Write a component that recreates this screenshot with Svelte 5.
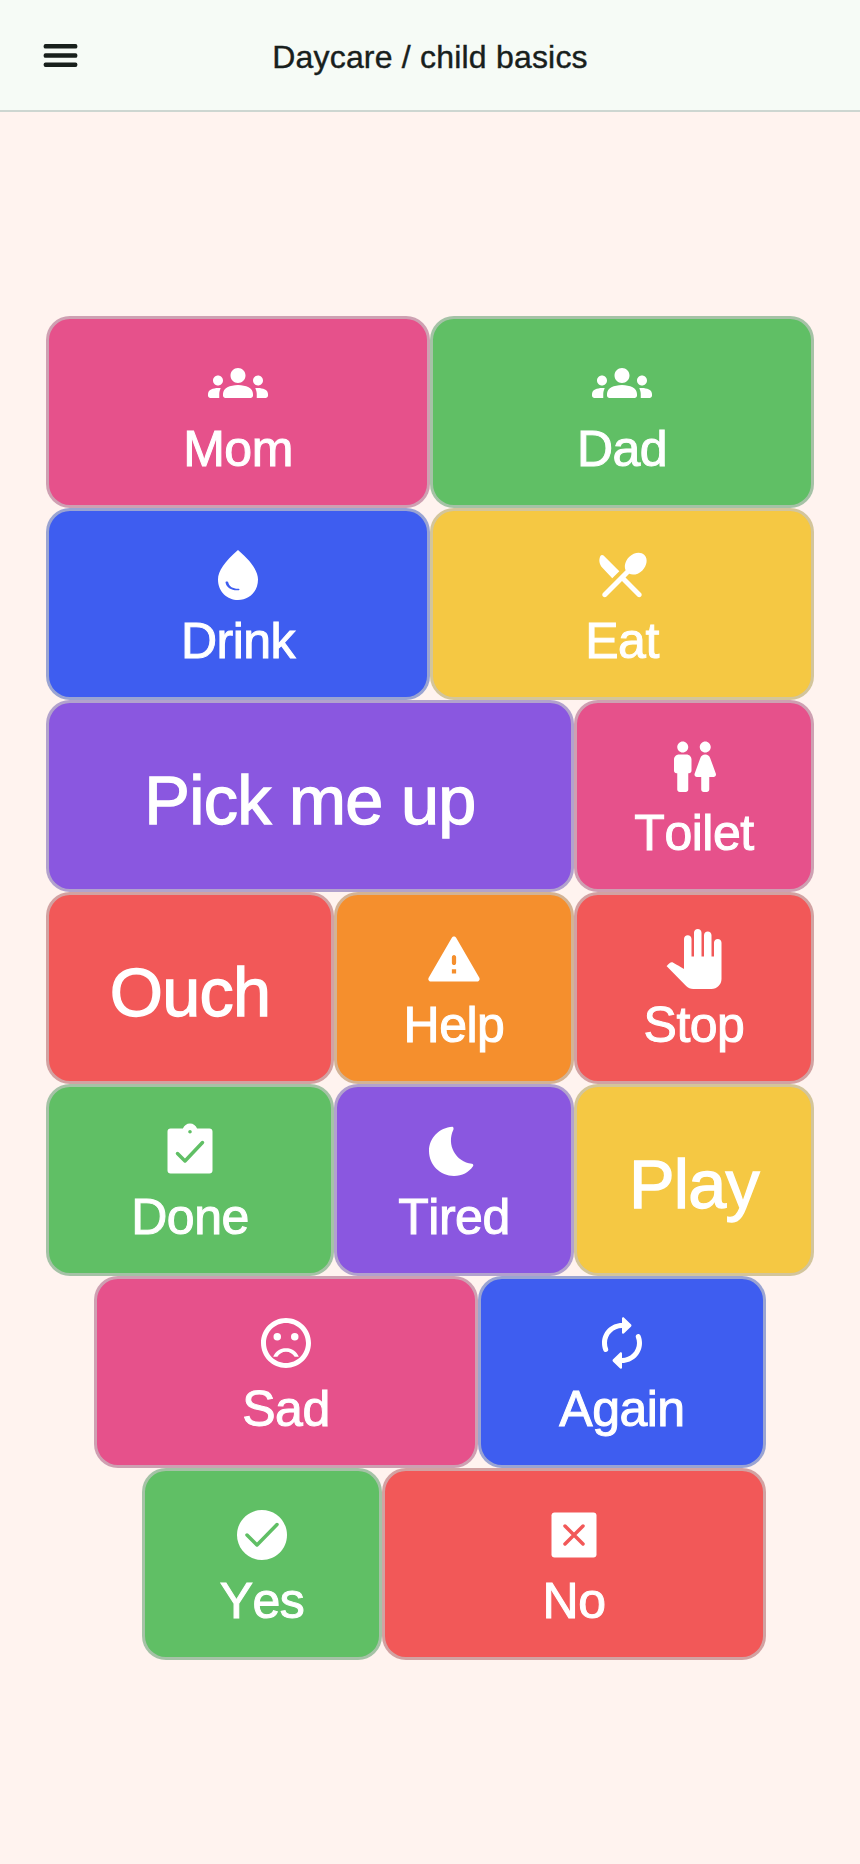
<script>
  const icons = {
    groups: 'M12 12.75c1.63 0 3.07.39 4.24.9 1.08.48 1.76 1.56 1.76 2.73V17c0 .55-.45 1-1 1H7c-.55 0-1-.45-1-1v-.61c0-1.18.68-2.26 1.76-2.73 1.17-.52 2.61-.91 4.24-.91zM4 13c1.1 0 2-.9 2-2s-.9-2-2-2-2 .9-2 2 .9 2 2 2zm1.13 1.1c-.37-.06-.74-.1-1.13-.1-.99 0-1.93.21-2.78.58C.48 14.9 0 15.62 0 16.43V17c0 .55.45 1 1 1h3.5v-1.61c0-.83.23-1.61.63-2.29zM20 13c1.1 0 2-.9 2-2s-.9-2-2-2-2 .9-2 2 .9 2 2 2zm4 3.43c0-.81-.48-1.53-1.22-1.85-.85-.37-1.79-.58-2.78-.58-.39 0-.76.04-1.13.1.4.68.63 1.46.63 2.29V18H23c.55 0 1-.45 1-1v-.57zM12 6c1.66 0 3 1.34 3 3s-1.34 3-3 3-3-1.34-3-3 1.34-3 3-3z',
    drop: 'M12 2c-5.33 4.55-8 8.48-8 11.8 0 4.98 3.8 8.2 8 8.2s8-3.22 8-8.2c0-3.32-2.67-7.25-8-11.8zM7.5 14.6c.3-.1.55.1.62.4.4 1.7 2 2.6 4.2 2.5.35 0 .35.55 0 .6-2.7.3-5-1-5.3-3.1-.03-.2.1-.36.48-.4z',
    eat: 'M8.1 13.34l2.83-2.83-6.3-6.3c-.39-.39-1.04-.28-1.28.22-.73 1.52-.46 3.4.8 4.66zM14.88 11.53c1.53.71 3.68.21 5.27-1.38 1.91-1.91 2.28-4.65.81-6.12-1.46-1.46-4.2-1.1-6.12.81-1.59 1.59-2.09 3.74-1.38 5.27L4.4 19.17c-.39.39-.39 1.02 0 1.41s1.02.39 1.41 0L12 14.41l6.18 6.18c.39.39 1.02.39 1.41 0s.39-1.02 0-1.41L13.41 13z',
    wc: 'M5.3 21v-6.5H5c-.55 0-1-.45-1-1V9c0-1.1.9-2 2-2h3c1.1 0 2 .9 2 2v4.5c0 .55-.45 1-1 1h-.3V21c0 .55-.45 1-1 1H6.3c-.55 0-1-.45-1-1zM18.1 21v-5h1.7c.68 0 1.16-.67.95-1.32l-2.3-6.31C18.18 7.55 17.42 7 16.56 7h-.12c-.86 0-1.63.55-1.9 1.37l-2.3 6.31c-.22.65.26 1.32.95 1.32h1.7v5c0 .55.45 1 1 1h1.2c.55 0 1-.45 1-1zM7.5 6.2c1.2 0 2.2-1 2.2-2.2S8.7 1.8 7.5 1.8 5.3 2.8 5.3 4s1 2.2 2.2 2.2zm9 0c1.2 0 2.2-1 2.2-2.2s-1-2.2-2.2-2.2-2.2 1-2.2 2.2 1 2.2 2.2 2.2z',
    warning: 'M2.73 21h18.53c.77 0 1.25-.83.87-1.5l-9.27-16c-.39-.67-1.35-.67-1.73 0l-9.27 16c-.38.67.1 1.5.87 1.5zM12.85 17.8h-1.7v-1.7h1.7v1.7zM12 14.4c-.45 0-.85-.4-.85-.85v-2.3c0-.45.4-.85.85-.85s.85.4.85.85v2.3c0 .45-.4.85-.85.85z',
    hand: 'M23 5.5V20c0 2.2-1.8 4-4 4h-7.3c-1.08 0-2.1-.43-2.85-1.19L1 14.83s1.26-1.23 1.3-1.25c.22-.19.49-.29.79-.29.22 0 .42.06.6.16.04.01 4.31 2.46 4.31 2.46V4c0-.83.67-1.5 1.5-1.5S11 3.17 11 4v7h1V1.5c0-.83.67-1.5 1.5-1.5S15 .67 15 1.5V11h1V2.5c0-.83.67-1.5 1.5-1.5s1.5.67 1.5 1.5V11h1V5.5c0-.83.67-1.5 1.5-1.5s1.5.67 1.5 1.5z',
    clipboard: 'M19.8 3h-4.98C14.4 1.84 13.3 1 12 1c-1.3 0-2.4.84-2.82 2H4.2C3.5 3 3 3.5 3 4.2v15.6c0 .7.5 1.2 1.2 1.2h15.6c.7 0 1.2-.5 1.2-1.2V4.2c0-.7-.5-1.2-1.2-1.2zM12 3.6c.39 0 .7.31.7.7s-.31.7-.7.7-.7-.31-.7-.7.31-.7.7-.7z',
    moon: 'M11.34 2.3C6.2 2.6 2 6.8 2 12c0 5.52 4.48 10 10 10 3.3 0 5.9-1.5 7.6-3.9.3-.45.06-1-.45-1.05-6.4-.65-10.3-7.6-7.4-13.6.2-.45 0-1.1-.41-1.15z',
    sad: 'M15.5 11a1.5 1.5 0 1 0 0-3 1.5 1.5 0 0 0 0 3zM8.5 11a1.5 1.5 0 1 0 0-3 1.5 1.5 0 0 0 0 3zM12 14c-2.33 0-4.32 1.45-5.12 3.5h1.67c.69-1.19 1.97-2 3.45-2s2.75.81 3.45 2h1.67c-.8-2.05-2.79-3.5-5.12-3.5zM11.99 2C6.47 2 2 6.48 2 12s4.47 10 9.99 10C17.52 22 22 17.52 22 12S17.52 2 11.99 2zM12 20c-4.42 0-8-3.58-8-8s3.58-8 8-8 8 3.58 8 8-3.58 8-8 8z',
    renew: 'M12 6v1.79c0 .45.54.67.85.35l2.79-2.79c.2-.2.2-.51 0-.71l-2.79-2.79c-.31-.31-.85-.09-.85.36V4c-4.42 0-8 3.58-8 8 0 1.04.2 2.04.57 2.95.27.67 1.13.85 1.64.34.27-.27.38-.68.23-1.04C6.15 13.56 6 12.79 6 12c0-3.31 2.69-6 6-6zm5.79 2.71c-.27.27-.38.69-.23 1.04.28.7.44 1.46.44 2.25 0 3.31-2.69 6-6 6v-1.79c0-.45-.54-.67-.85-.35l-2.79 2.79c-.2.2-.2.51 0 .71l2.79 2.79c.31.31.85.09.85-.35V20c4.42 0 8-3.58 8-8 0-1.04-.2-2.04-.57-2.95-.27-.67-1.13-.85-1.64-.34z',
    yes: 'M12 2C6.48 2 2 6.48 2 12s4.48 10 10 10 10-4.48 10-10S17.52 2 12 2z',
    no: 'M4.2 3h15.6c.7 0 1.2.5 1.2 1.2v15.6c0 .7-.5 1.2-1.2 1.2H4.2C3.5 21 3 20.5 3 19.8V4.2C3 3.5 3.5 3 4.2 3z'
  };

  const details = {
    clipboard: 'M7 13l3 3 7-7.4',
    yes: 'M6 12l4 4 8-8.2',
    no: 'M8.4 8.4l7.2 7.2M15.6 8.4l-7.2 7.2'
  };

  const rows = [
    { items: [{ t: 'Mom', c: 'pink', w: 'w8', i: 'groups' }, { t: 'Dad', c: 'green', w: 'w8', i: 'groups' }] },
    { items: [{ t: 'Drink', c: 'blue', w: 'w8', i: 'drop' }, { t: 'Eat', c: 'yellow', w: 'w8', i: 'eat' }] },
    { items: [{ t: 'Pick me up', c: 'purple', w: 'w11' }, { t: 'Toilet', c: 'pink', w: 'w5', i: 'wc' }] },
    { items: [{ t: 'Ouch', c: 'red', w: 'w6' }, { t: 'Help', c: 'orange', w: 'w5', i: 'warning' }, { t: 'Stop', c: 'red', w: 'w5', i: 'hand' }] },
    { items: [{ t: 'Done', c: 'green', w: 'w6', i: 'clipboard' }, { t: 'Tired', c: 'purple', w: 'w5', i: 'moon' }, { t: 'Play', c: 'yellow', w: 'w5' }] },
    { items: [{ t: 'Sad', c: 'pink', w: 'w8', i: 'sad' }, { t: 'Again', c: 'blue', w: 'w6', i: 'renew' }] },
    { shift: true, items: [{ t: 'Yes', c: 'green', w: 'w5', i: 'yes' }, { t: 'No', c: 'red', w: 'w8', i: 'no' }] }
  ];
</script>

<div class="page">
  <header class="bar">
    <button class="menu" aria-label="Menu">
      <svg viewBox="0 0 24 24" class="menu-icon">
        <rect x="3" y="5.9" width="18" height="2.4" rx="1" />
        <rect x="3" y="10.8" width="18" height="2.4" rx="1" />
        <rect x="3" y="15.7" width="18" height="2.4" rx="1" />
      </svg>
    </button>
    <h1>Daycare / child basics</h1>
  </header>
  <main class="board">
    {#each rows as row}
      <div class="row" class:shift={row.shift}>
        {#each row.items as b}
          <button class="tile {b.c} {b.w}" class:big={!b.i}>
            {#if b.i}
              <svg viewBox="0 0 24 24" class="icon">
                <path fill-rule="evenodd" d={icons[b.i]} />
                {#if details[b.i]}
                  <path class="detail" d={details[b.i]} />
                {/if}
              </svg>
            {/if}
            <span class="label">{b.t}</span>
          </button>
        {/each}
      </div>
    {/each}
  </main>
</div>

<style>
  :global(body) {
    margin: 0;
    background: #fff3ef;
    font-family: "Liberation Sans", Arial, sans-serif;
  }
  .page {
    display: flex;
    flex-direction: column;
    height: 100vh;
  }
  .bar {
    position: relative;
    flex: none;
    height: 110px;
    display: flex;
    align-items: center;
    justify-content: center;
    background: #f6fbf6;
    border-bottom: 2px solid #cdd6d1;
  }
  .menu {
    position: absolute;
    left: 37.5px;
    top: 33px;
    width: 45px;
    height: 45px;
    padding: 0;
    border: 0;
    background: none;
  }
  .menu-icon {
    display: block;
    width: 45px;
    height: 45px;
    fill: #18201c;
  }
  h1 {
    margin: 5px 0 0;
    font-size: 32px;
    font-weight: 400;
    letter-spacing: 0.2px;
    color: #18201c;
    -webkit-text-stroke: 0.4px #18201c;
  }
  .board {
    flex: 1;
    display: flex;
    flex-direction: column;
    justify-content: center;
    align-items: center;
  }
  .row {
    display: flex;
    justify-content: center;
  }
  .shift {
    margin-left: 48px;
  }
  .tile {
    box-sizing: border-box;
    height: 192px;
    padding: 0;
    display: flex;
    flex-direction: column;
    align-items: center;
    justify-content: center;
    border: 3px solid rgba(196, 196, 196, 0.69);
    border-radius: 24px;
    background-color: var(--tile);
    color: #fff;
    font-family: inherit;
  }
  .w5 { width: 240px; }
  .w6 { width: 288px; }
  .w8 { width: 384px; }
  .w11 { width: 528px; }
  .pink { --tile: #e6518b; }
  .green { --tile: #60bf65; }
  .blue { --tile: #3e5df0; }
  .yellow { --tile: #f5c843; }
  .purple { --tile: #8a57e0; }
  .red { --tile: #f25858; }
  .orange { --tile: #f58f2d; }
  .icon {
    display: block;
    width: 60px;
    height: 60px;
    fill: #fff;
  }
  .detail {
    fill: none;
    stroke: var(--tile);
    stroke-width: 1.4;
    stroke-linecap: round;
    stroke-linejoin: round;
  }
  .label {
    margin-top: 14px;
    font-size: 50px;
    line-height: 44px;
    letter-spacing: -0.5px;
    font-kerning: none;
    -webkit-text-stroke: 1px #fff;
  }
  .big .label {
    margin-top: 7px;
    font-size: 68.4px;
    line-height: 80px;
    letter-spacing: -0.7px;
    -webkit-text-stroke: 1.3px #fff;
  }
</style>
